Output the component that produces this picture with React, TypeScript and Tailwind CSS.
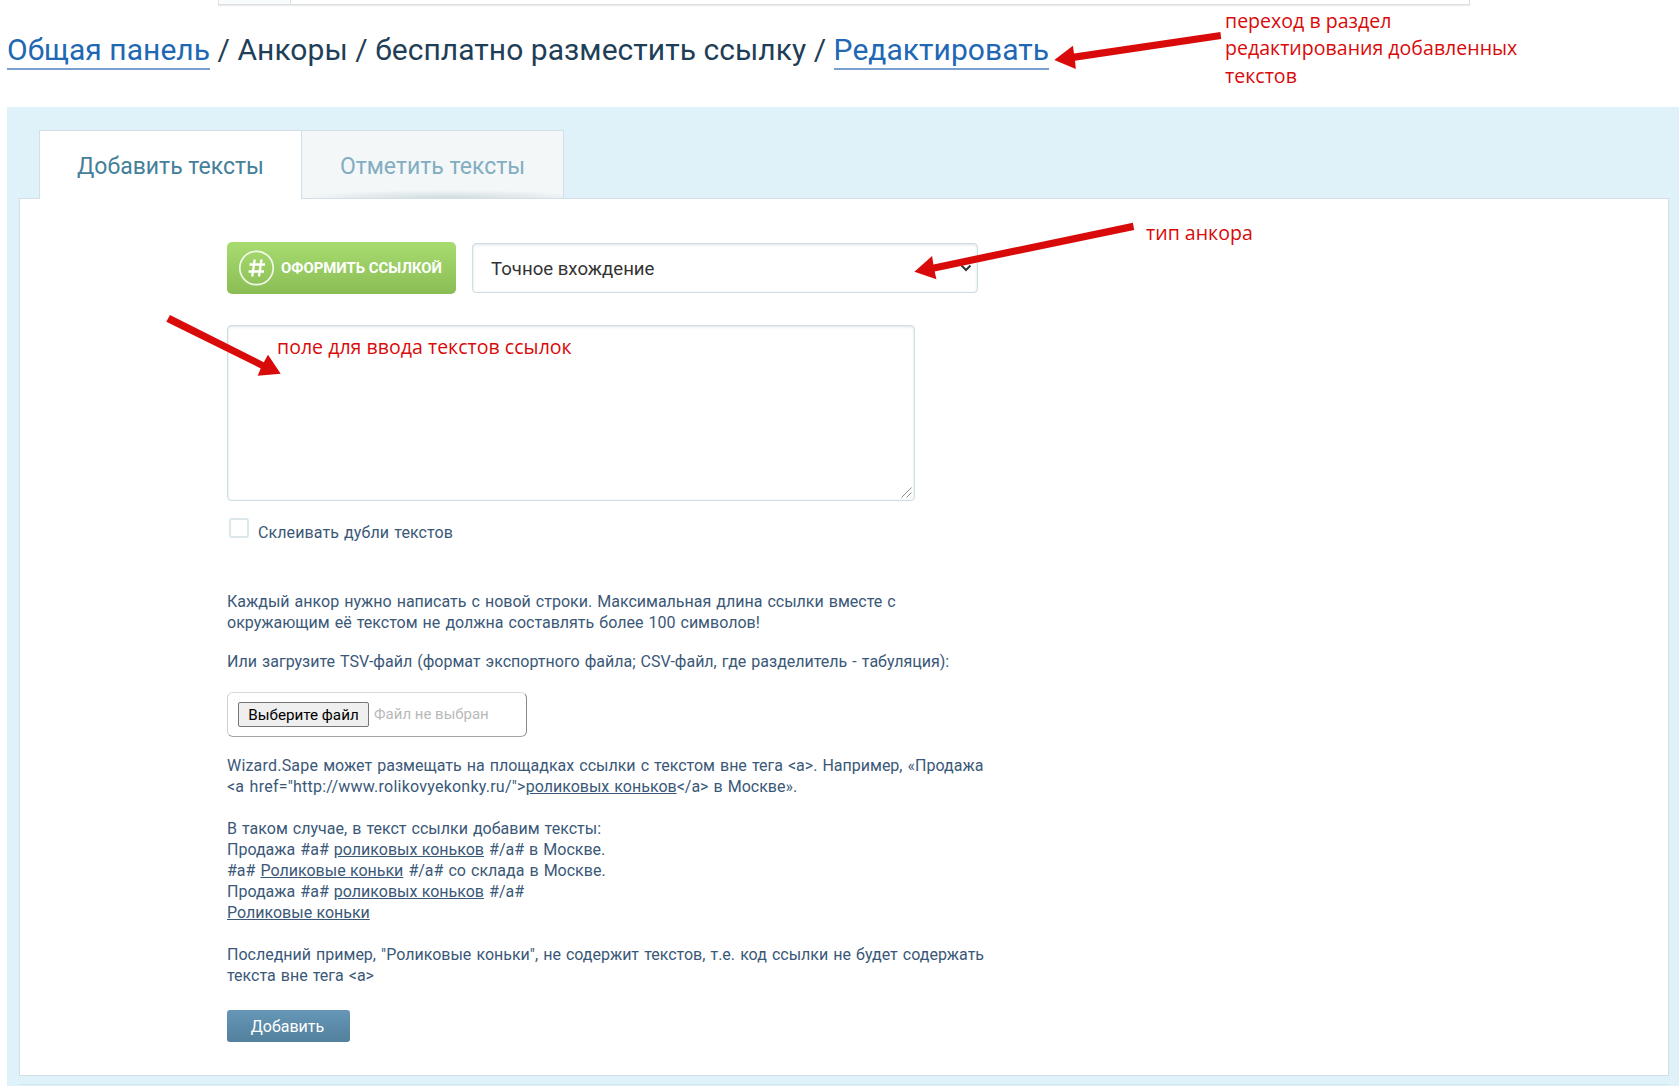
import type { ReactNode } from 'react'

const ARROWS = [
  '1054.3,60 1072.9,45.7 1074,53.4 1220.4,32 1221.2,39 1075,60.7 1075.8,69',
  '914.4,271.7 932.1,256 933.4,264.4 1132.9,222.7 1134.2,230 934.7,271.4 936.4,279.3',
  '280.7,373.7 268,354.7 263.8,362.3 170,315 166.3,321.7 260.7,368.4 257.7,375.7',
]

const LINES = [
  ['Продажа #a# ', 'роликовых коньков', ' #/a# в Москве.'],
  ['#a# ', 'Роликовые коньки', ' #/a# со склада в Москве.'],
  ['Продажа #a# ', 'роликовых коньков', ' #/a#'],
  ['', 'Роликовые коньки', ''],
]

function Note({ className, children }: { className: string; children: ReactNode }) {
  return (
    <p className={`absolute origin-left scale-x-[0.978] font-['Open_Sans',sans-serif] text-[20px] leading-[27.3px] whitespace-nowrap text-[#d90a0a] ${className}`}>
      {children}
    </p>
  )
}

function Crumb({ children }: { children: ReactNode }) {
  return (
    <a href="#" className="inline-block h-[37px] border-b-2 border-[#78a1cf] text-[#2067b4]">
      {children}
    </a>
  )
}

export default function App() {
  return (
    <div className="relative h-[1086px] w-[1679px] overflow-hidden bg-white font-[Roboto,sans-serif] text-[#3a5878]">
      {/* Bottom edge of the card above */}
      <div className="ml-[218px] flex h-[5px] w-[1252px] border-x border-b border-[#dde1e3] shadow-[0_1px_1px_rgba(0,0,0,0.08)]">
        <div className="w-[72px] border-r border-[#d5e3ea] bg-[#f8fcfd]" />
      </div>

      <h1 className="mt-[28px] ml-[7px] h-[74px] text-[30px] leading-[33px] tracking-[0.045px] whitespace-nowrap text-[#1f3f58]">
        <Crumb>Общая панель</Crumb> / Анкоры / бесплатно разместить ссылку / <Crumb>Редактировать</Crumb>
      </h1>

      <div className="ml-[7px] h-[979px] bg-[#dff2fa] pt-[23px] pl-[12px]">
        <div className="ml-[20px] flex h-[68px] w-[525px] border-x border-t border-[#d3dfe6] text-[23px]">
          <div className="relative z-10 -mb-px flex w-[262px] items-center justify-center border-r border-[#d3dfe6] bg-white pt-[5px] text-[#44809a]">
            Добавить тексты
          </div>
          <div className="relative flex flex-1 items-center justify-center overflow-hidden bg-[#f3f7f8] pt-[5px] text-[#83adc1]">
            Отметить тексты
            <div className="absolute -bottom-[8px] left-0 h-[16px] w-[290px] bg-[radial-gradient(closest-side,#d0dbdf,transparent)]" />
          </div>
        </div>

        <div className="h-[878px] w-[1650px] border border-[#d3dfe6] bg-white pt-[43px] pl-[207px]">
          <div className="flex items-start">
            <button className="flex h-[52px] w-[229px] items-center rounded-[5px] bg-linear-to-b from-[#a8dc70] to-[#8abd55] pl-[11px] text-[14.9px] font-bold text-white">
              <svg width="36" height="36" viewBox="0 0 36 36" fill="none" stroke="white">
                <circle cx="18.500" cy="18" r="16.7" strokeWidth="1.7" strokeOpacity="0.85" />
                <path d="M16.700 9.500l-2.500 17M23.500 9.500l-2.500 17M11.500 14.500h15.500M10.500 21.500h15.500" strokeWidth="2.300" />
              </svg>
              <span className="ml-[7px] whitespace-nowrap">ОФОРМИТЬ ССЫЛКОЙ</span>
            </button>
            <div className="mt-px ml-[16px] flex h-[50px] w-[506px] items-center justify-between rounded-[4px] border border-[#cfdce2] pr-[5px] pl-[18px] text-[18.6px] text-[#333] shadow-[inset_0_1px_3px_#dbe4e9]">
              <span className="pt-[3px] whitespace-nowrap">Точное вхождение</span>
              <svg width="12" height="8" viewBox="0 0 12 8" fill="none" stroke="#333" strokeWidth="2">
                <path d="M1.500 1.500L6 6l4.500-4.500" />
              </svg>
            </div>
          </div>

          <div className="mt-[31px] flex h-[176px] w-[688px] items-end justify-end rounded-[4px] border border-[#cfdce2] p-[2px] shadow-[inset_0_1px_3px_#dbe4e9]">
            <svg width="11" height="11" viewBox="0 0 11 11" fill="none" stroke="#8b8b8b">
              <path d="M0.500 10.500l10-10M5.500 10.500l5-5" />
            </svg>
          </div>

          <div className="mt-[17px] flex h-[29px] items-start pl-[2px]">
            <div className="size-[20px] rounded-[3px] border-2 border-[#dde6ea] bg-white" />
            <span className="ml-[9px] pt-[4px] text-[16px] leading-[21px] tracking-[0.1px] [word-spacing:1px]">Склеивать дубли текстов</span>
          </div>

          <div className="text-[16px] leading-[21px] whitespace-nowrap [word-spacing:1.1px]">
            <p className="mt-[44px]">
              Каждый анкор нужно написать с новой строки. Максимальная длина ссылки вместе с<br />
              окружающим её текстом не должна составлять более 100 символов!
            </p>
            <p className="mt-[18px]">
              Или загрузите TSV-файл (формат экспортного файла; CSV-файл, где разделитель - табуляция):
            </p>

            <div className="mt-[20px] flex h-[45px] w-[300px] items-center rounded-[6px] border border-t-[#d9d9d9] border-r-[#888] border-b-[#a5a5a5] border-l-[#d0d0d0] pl-[10px] text-[15px]">
              <button className="h-[25px] w-[131px] rounded-[2px] border border-[#767676] bg-[#efefef] text-[15.2px] leading-[22px] text-black">
                Выберите файл
              </button>
              <span className="ml-[5px] text-[#b9b9b9] [word-spacing:0]">Файл не выбран</span>
            </div>

            <p className="mt-[18px]">
              <span className="tracking-[0.2px]">Wizard.Sape</span> может размещать на площадках ссылки с текстом вне тега &lt;a&gt;. Например, «Продажа<br />
              <span className="tracking-[0.235px]">&lt;a href="http://www.rolikovyekonky.ru/"&gt;</span>
              <u>роликовых коньков</u>&lt;/a&gt; в Москве».
            </p>
            <div className="mt-[21px]">
              <p>В таком случае, в текст ссылки добавим тексты:</p>
              {LINES.map(([before, link, after], i) => (
                <p key={i}>
                  {before}
                  <u className="[word-spacing:0.3px]">{link}</u>
                  {after}
                </p>
              ))}
            </div>
            <p className="mt-[21px]">
              Последний пример, "Роликовые коньки", не содержит текстов, т.е. код ссылки не будет содержать<br />
              текста вне тега &lt;a&gt;
            </p>
          </div>

          <button className="mt-[24px] block h-[32px] w-[123px] rounded-[3px] bg-linear-to-b from-[#6697b6] to-[#52809d] pr-[2px] text-[16px] leading-[34px] text-white">
            Добавить
          </button>
        </div>

        <div className="mt-[8px] h-px w-[1650px] bg-[#d0e7f2]" />
      </div>

      {/* Annotations lie over the form */}
      <svg className="pointer-events-none absolute inset-0" width="1679" height="1086" fill="#d90a0a">
        {ARROWS.map((points) => (
          <polygon key={points} points={points} />
        ))}
      </svg>
      <Note className="top-[7px] left-[1225px]">
        переход в раздел<br />
        редактирования добавленных<br />
        текстов
      </Note>
      <Note className="top-[219px] left-[1146px]">тип анкора</Note>
      <Note className="top-[333px] left-[277px]">поле для ввода текстов ссылок</Note>
    </div>
  )
}
